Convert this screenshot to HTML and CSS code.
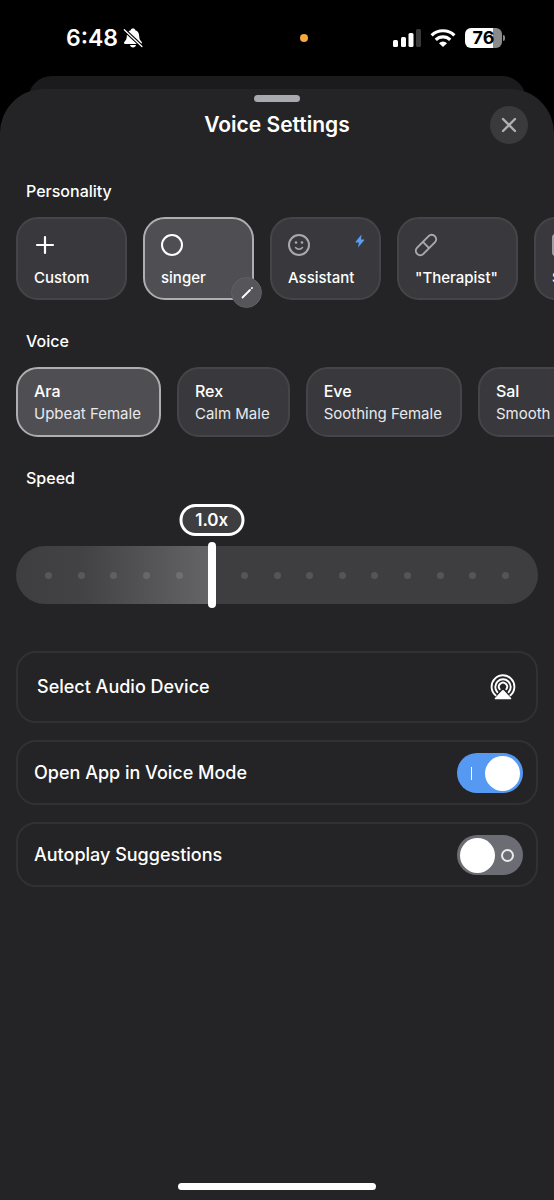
FILE: index.html
```html
<!DOCTYPE html>
<html lang="en">
<head>
    <meta charset="UTF-8">
    <meta name="viewport" content="width=device-width, initial-scale=1.0">
    <title>Voice Settings</title>
    <link rel="stylesheet" href="styles.css">
</head>
<body>

<div class="status-bar">
    <div class="status-left">
        <span class="clock">6:48</span>
        <svg class="bell" viewBox="0 0 20 20" width="20" height="20" aria-hidden="true">
            <path d="M10 .5c-1.300 0-2.100.7-2.300 1.700C5.200 3 3.900 5 3.800 8c-.1 3-.8 4.200-2.300 5.700-1 1-.5 2.300.7 2.300h15.600c1.200 0 1.700-1.300.7-2.300-1.500-1.500-2.200-2.700-2.300-5.700-.1-3-1.400-5-3.900-5.800C12.100 1.200 11.300.5 10 .5z" fill="#fff"/>
            <path d="M7 17h6c-.3 1.600-1.400 2.400-3 2.400S7.300 18.600 7 17z" fill="#fff"/>
            <path d="M1 1.500l18 17" stroke="#000" stroke-width="3.600"/>
            <path d="M1.300 1.700l17.600 16.800" stroke="#fff" stroke-width="1.300" stroke-linecap="round"/>
        </svg>
    </div>
    <span class="mic-dot"></span>
    <div class="status-right">
        <svg viewBox="0 0 28 18" width="28" height="18" aria-hidden="true">
            <rect x="0" y="11" width="5" height="7" rx="1.500" fill="#fff"/>
            <rect x="8" y="8" width="5" height="10" rx="1.500" fill="#fff"/>
            <rect x="15.500" y="4" width="5" height="14" rx="1.500" fill="#fff"/>
            <rect x="23" y="0" width="5" height="18" rx="1.500" fill="#3a3a3a"/>
        </svg>
        <svg viewBox="0 0 26 18" width="26" height="18" aria-hidden="true">
            <g fill="none" stroke="#fff" stroke-width="3.200">
                <path d="M1.600 6.400a16.300 16.300 0 0 1 22.800 0"/>
                <path d="M5.800 10.800a10.300 10.300 0 0 1 14.400 0"/>
            </g>
            <path d="M9 14.200a5.800 5.800 0 0 1 8 0L13 18z" fill="#fff"/>
        </svg>
        <div class="battery"><span>76</span></div>
    </div>
</div>

<div class="back-sheet"></div>

<main class="sheet">
    <div class="grabber"></div>
    <header class="sheet-header">
        <h1>Voice Settings</h1>
        <button type="button" class="close" aria-label="Close">
            <svg viewBox="0 0 14 14" width="14" height="14"><path d="M1 1l12 12M13 1L1 13" stroke="#b0b0b3" stroke-width="2.400" stroke-linecap="round"/></svg>
        </button>
    </header>

    <section>
        <h2>Personality</h2>
        <div class="scroller">
            <div class="card-wrap">
                <button type="button" class="card persona">
                    <svg viewBox="0 0 22 22" width="22" height="22"><path d="M11 3v16M3 11h16" stroke="#fff" stroke-width="2.200" stroke-linecap="round"/></svg>
                    <span>Custom</span>
                </button>
            </div>
            <div class="card-wrap">
                <button type="button" class="card persona selected" aria-pressed="true">
                    <svg viewBox="0 0 22 22" width="22" height="22"><circle cx="11" cy="11" r="10" fill="none" stroke="#fff" stroke-width="2"/></svg>
                    <span>singer</span>
                </button>
                <button type="button" class="edit" aria-label="Edit singer">
                    <svg viewBox="0 0 12 12" width="12" height="12"><path d="M1.500 10.500L9 3" stroke="#fff" stroke-width="1.800" stroke-linecap="round"/><path d="M10.800 1.200l.2-.2" stroke="#fff" stroke-width="1.800" stroke-linecap="round"/></svg>
                </button>
            </div>
            <div class="card-wrap">
                <button type="button" class="card persona">
                    <svg viewBox="0 0 22 22" width="22" height="22">
                        <circle cx="11" cy="11" r="10" fill="none" stroke="#a9a9ac" stroke-width="2"/>
                        <circle cx="8" cy="8.500" r="1.300" fill="#a9a9ac"/>
                        <circle cx="14" cy="8.500" r="1.300" fill="#a9a9ac"/>
                        <path d="M7.500 13.500c1.800 2.200 5.200 2.200 7 0" fill="none" stroke="#a9a9ac" stroke-width="1.500" stroke-linecap="round"/>
                    </svg>
                    <span>Assistant</span>
                </button>
                <svg class="bolt" viewBox="0 0 10 14" width="10" height="14" aria-hidden="true"><path d="M6.500.5L.6 7.800c-.2.300 0 .6.300.6h3L3 13.500l6.200-7.300c.2-.3 0-.6-.3-.6H6z" fill="#5a9df5"/></svg>
            </div>
            <div class="card-wrap">
                <button type="button" class="card persona">
                    <svg viewBox="0 0 22 22" width="22" height="22">
                        <g transform="rotate(-45 11 11)" fill="none" stroke="#a9a9ac" stroke-width="2">
                            <rect x="-1.500" y="6.600" width="25" height="8.800" rx="4.400"/>
                            <path d="M11 6.600v8.800"/>
                        </g>
                    </svg>
                    <span>"Therapist"</span>
                </button>
            </div>
            <div class="card-wrap">
                <button type="button" class="card persona">
                    <svg viewBox="0 0 22 22" width="22" height="22"><rect x="1" y="1" width="20" height="20" rx="2" fill="none" stroke="#a9a9ac" stroke-width="1.800"/><path d="M6 7h10M6 11h10M6 15h6" stroke="#a9a9ac" stroke-width="1.800"/></svg>
                    <span>Storyteller</span>
                </button>
            </div>
        </div>
    </section>

    <section>
        <h2>Voice</h2>
        <div class="scroller">
            <button type="button" class="card voice selected" aria-pressed="true"><strong>Ara</strong><span>Upbeat Female</span></button>
            <button type="button" class="card voice"><strong>Rex</strong><span>Calm Male</span></button>
            <button type="button" class="card voice"><strong>Eve</strong><span>Soothing Female</span></button>
            <button type="button" class="card voice"><strong>Sal</strong><span>Smooth Male</span></button>
        </div>
    </section>

    <section>
        <h2><label for="speed">Speed</label></h2>
        <div class="slider" id="slider" style="--pos: 37.5%">
            <output class="bubble" id="speedValue" for="speed">1.0x</output>
            <div class="track">
                <i></i><i></i><i></i><i></i><i></i><i></i><i></i><i></i><i></i><i></i><i></i><i></i><i></i><i></i><i></i>
            </div>
            <input type="range" id="speed" min="0.4" max="2" step="0.1" value="1">
        </div>
    </section>

    <section class="options">
        <button type="button" class="option device">
            <span>Select Audio Device</span>
            <svg viewBox="0 0 26 26" width="26" height="26" aria-hidden="true">
                <g fill="none" stroke="#fff" stroke-width="1.900" stroke-linecap="round">
                    <path d="M5.500 21.300a11.400 11.400 0 1 1 15 0"/>
                    <path d="M7.300 18.200a7.700 7.700 0 1 1 11.400 0"/>
                    <path d="M9.700 15.200a4.100 4.100 0 1 1 6.600 0"/>
                </g>
                <path d="M12.200 16.300a1.100 1.100 0 0 1 1.600 0l7.200 7.800c.5.500.2 1.200-.5 1.200h-15c-.7 0-1-.7-.5-1.200z" fill="#fff"/>
            </svg>
        </button>
        <div class="option">
            <label for="openVoice">Open App in Voice Mode</label>
            <input type="checkbox" role="switch" class="switch" id="openVoice" checked>
        </div>
        <div class="option">
            <label for="autoplay">Autoplay Suggestions</label>
            <input type="checkbox" role="switch" class="switch" id="autoplay">
        </div>
    </section>

    <div class="home-indicator"></div>
</main>

<script>
    const speed = document.getElementById('speed');

    speed.addEventListener('input', function() {
        const pos = (speed.value - speed.min) / (speed.max - speed.min) * 100;
        document.getElementById('slider').style.setProperty('--pos', pos + '%');
        document.getElementById('speedValue').textContent = Number(speed.value).toFixed(1) + 'x';
    });
</script>

</body>
</html>
```
FILE: styles.css
```css
*, *::before, *::after {
    box-sizing: border-box;
}

body {
    margin: 0;
    min-height: 100vh;
    display: flex;
    flex-direction: column;
    background-color: #000;
    color: #fff;
    font-family: Inter, 'Liberation Sans', sans-serif;
    font-size: 16px;
    line-height: 20px;
}

button {
    font: inherit;
    color: inherit;
    cursor: pointer;
}

svg {
    display: block;
    overflow: visible;
    flex-shrink: 0;
}

/* Status bar */
.status-bar {
    display: grid;
    grid-template-columns: 1fr auto 1fr;
    align-items: center;
    height: 76px;
    padding: 0 52px 0 66px;
}

.status-left, .status-right {
    display: flex;
    align-items: center;
}

.status-left {
    gap: 5px;
}

.status-right {
    justify-content: flex-end;
    gap: 9px;
}

.clock {
    font-size: 23px;
    font-weight: 600;
}

.mic-dot {
    width: 8px;
    height: 8px;
    margin-left: 40px;
    border-radius: 50%;
    background-color: #f5a742;
}

.battery {
    position: relative;
    width: 37px;
    height: 20px;
    border-radius: 6px;
    background: linear-gradient(to right, #fff 76%, #8a8a8a 76%);
    color: #000;
    font-size: 18px;
    font-weight: 700;
    text-align: center;
}

.battery::after {
    content: "";
    position: absolute;
    top: 7px;
    right: -3px;
    width: 2px;
    height: 6px;
    border-radius: 0 2px 2px 0;
    background-color: #8a8a8a;
}

/* Sheet */
.back-sheet {
    height: 36px;
    margin: 0 28px;
    border-radius: 24px 24px 0 0;
    background-color: #1b1b1d;
}

.sheet {
    flex: 1;
    display: flex;
    flex-direction: column;
    margin-top: -23px;
    padding-top: 6px;
    border-radius: 44px 44px 0 0;
    background-color: #242426;
}

.grabber {
    width: 46px;
    height: 7px;
    margin: 0 auto 4px;
    border-radius: 4px;
    background-color: #a9a9b0;
}

.sheet-header {
    display: grid;
    grid-template-columns: 1fr auto 1fr;
    align-items: center;
    margin-bottom: 37px;
    padding: 0 26px;
}

h1 {
    grid-column: 2;
    margin: 0;
    font-size: 21px;
    font-weight: 600;
}

.close {
    display: grid;
    place-items: center;
    justify-self: end;
    width: 38px;
    height: 38px;
    padding: 0;
    border: none;
    border-radius: 50%;
    background-color: #3a3a3c;
}

h2 {
    margin: 0 26px 16px;
    font-size: 16px;
    font-weight: 500;
}

/* Cards */
.scroller {
    display: flex;
    gap: 16px;
    padding: 0 16px 31px;
    overflow-x: auto;
    scrollbar-width: none;
}

.card-wrap {
    position: relative;
    flex-shrink: 0;
}

.card {
    display: flex;
    flex-direction: column;
    flex-shrink: 0;
    align-items: flex-start;
    min-width: 111px;
    padding: 12px 18px 12px 16px;
    border: 2px solid #454549;
    border-radius: 22px;
    background-color: #39393d;
    text-align: left;
    white-space: nowrap;
}

.card.selected {
    border-color: #aeaeb1;
    background-color: #4f4f53;
}

.persona {
    gap: 12px;
    height: 83px;
    padding-top: 15px;
    padding-bottom: 8px;
    font-size: 15px;
    font-weight: 500;
}

.voice {
    gap: 3px;
    height: 70px;
    font-size: 15px;
}

.voice strong {
    font-size: 16px;
    font-weight: 500;
}

.voice span {
    color: #e9e9eb;
}

.edit {
    position: absolute;
    right: -8px;
    bottom: -8px;
    display: grid;
    place-items: center;
    width: 31px;
    height: 31px;
    padding: 0;
    border: 1px solid #606064;
    border-radius: 50%;
    background-color: #55555a;
}

.bolt {
    position: absolute;
    top: 17px;
    right: 16px;
}

/* Speed slider */
.slider {
    position: relative;
    margin: 0 16px 47px;
    padding-top: 42px;
}

.bubble {
    position: absolute;
    top: 0;
    left: var(--pos);
    transform: translateX(-50%);
    padding: 4px 13px;
    border: 3px solid #fff;
    border-radius: 16px;
    background-color: #3e3e40;
    font-size: 17px;
    font-weight: 600;
    line-height: 18px;
}

.track {
    display: grid;
    grid-template-columns: repeat(15, 1fr);
    place-items: center;
    height: 58px;
    padding: 0 calc(100% / 32);
    border-radius: 29px;
    background: linear-gradient(to right, #3e3e40 0, #434345 calc(var(--pos) * 0.350), #656567 var(--pos), #3e3e40 var(--pos));
}

.track i {
    width: 7px;
    height: 7px;
    border-radius: 50%;
    background-color: rgba(255, 255, 255, 0.12);
}

.slider input {
    position: absolute;
    left: -4px;
    bottom: -4px;
    width: calc(100% + 8px);
    height: 66px;
    margin: 0;
    appearance: none;
    background: none;
}

.slider input::-webkit-slider-thumb {
    appearance: none;
    width: 8px;
    height: 66px;
    border-radius: 4px;
    background-color: #fff;
}

/* Option rows */
.options {
    display: flex;
    flex-direction: column;
    gap: 17px;
    padding: 0 16px;
}

.option {
    display: flex;
    justify-content: space-between;
    align-items: center;
    min-height: 65px;
    padding: 0 13px 0 16px;
    border: 2px solid #313134;
    border-radius: 20px;
    background: none;
    font-size: 18px;
    font-weight: 500;
}

.option.device {
    min-height: 72px;
    padding: 0 20px 0 19px;
}

.switch {
    appearance: none;
    position: relative;
    width: 66px;
    height: 40px;
    margin: 0;
    border-radius: 20px;
    background-color: #6c6c74;
    cursor: pointer;
}

.switch::before {
    content: "";
    position: absolute;
    top: 3px;
    left: 3px;
    width: 35px;
    height: 35px;
    border-radius: 50%;
    background-color: #fff;
}

.switch::after {
    content: "";
    position: absolute;
    top: 14px;
    right: 9px;
    width: 13px;
    height: 13px;
    border: 2px solid #e9e9eb;
    border-radius: 50%;
}

.switch:checked {
    background-color: #5599f2;
}

.switch:checked::before {
    left: 28px;
}

.switch:checked::after {
    left: 14px;
    width: 1px;
    border: none;
    border-radius: 0;
    background-color: #fff;
}

.home-indicator {
    width: 198px;
    height: 7px;
    margin: auto auto 10px;
    border-radius: 4px;
    background-color: #fff;
}
```
